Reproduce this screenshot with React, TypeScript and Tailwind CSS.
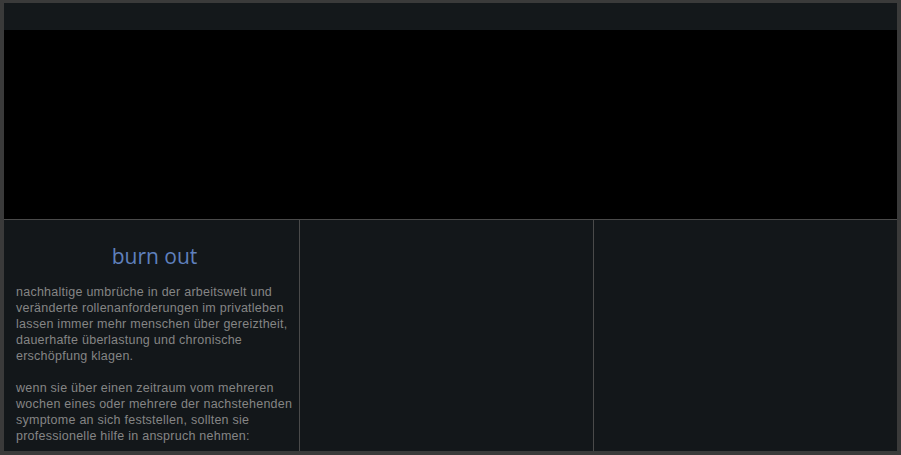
import type { FC } from "react";

const intro = [
  "nachhaltige umbrüche in der arbeitswelt und",
  "veränderte rollenanforderungen im privatleben",
  "lassen immer mehr menschen über gereiztheit,",
  "dauerhafte überlastung und chronische",
  "erschöpfung klagen.",
];

const hint = [
  "wenn sie über einen zeitraum vom mehreren",
  "wochen eines oder mehrere der nachstehenden",
  "symptome an sich feststellen, sollten sie",
  "professionelle hilfe in anspruch nehmen:",
];

const Lines: FC<{ lines: string[] }> = ({ lines }) => (
  <p className="whitespace-nowrap">
    {lines.map((l, i) => (
      <span key={i} className="block">
        {l}
      </span>
    ))}
  </p>
);

const App: FC = () => {
  return (
    <div className="w-[901px] h-[455px] bg-[#3a3a3a] pt-[3px] pl-[4px] pr-[4px] pb-[4px] flex flex-col overflow-hidden">
      {/* header strip */}
      <div className="h-[27px] bg-[#14181b]" />
      {/* banner */}
      <div className="h-[189px] bg-black" />
      <div className="h-px bg-[#4a4a4a]" />

      {/* content columns */}
      <div className="flex-1 flex bg-[#13171a]">
        <div className="w-[295px] px-[12px] pt-[22px] font-['Liberation_Sans',Arial,sans-serif] text-[12.5px] leading-[16px] text-[#858585] tracking-[0.25px]">
          <h1 className="text-center text-[21px] leading-[28px] text-[#5f80bd] font-['Open_Sans','DejaVu_Sans',sans-serif] tracking-normal pl-[6px] mb-[14px]">
            burn out
          </h1>
          <Lines lines={intro} />
          <div className="h-[16px]" />
          <Lines lines={hint} />
        </div>
        <div className="w-px bg-[#4a4a4a]" />
        <div className="w-[293px]" />
        <div className="w-px bg-[#4a4a4a]" />
        <div className="flex-1" />
      </div>
    </div>
  );
};

export default App;
